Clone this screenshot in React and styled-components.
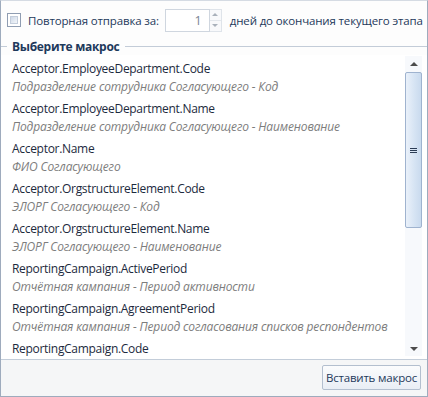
import React from "react";
import styled, { createGlobalStyle } from "styled-components";

const Global = createGlobalStyle`
  html, body { margin: 0; padding: 0; background: #fff; }
  body { font-family: "Open Sans", "Noto Sans", "Liberation Sans", sans-serif; }
  * { box-sizing: border-box; }
`;

const Window = styled.div`
  width: 428px;
  height: 397px;
  border: 1px solid #9eabbd;
  border-top-color: #d5dbe3;
  background: #fdfdfd;
  display: flex;
  flex-direction: column;
  font-size: 12px;
  color: #1e395b;
  overflow: hidden;
`;

const TopRow = styled.div`
  height: 36px;
  display: flex;
  align-items: center;
  padding: 2px 0 0 6px;
  font-size: 11.5px;
`;

const Check = styled.span`
  flex: 0 0 14px;
  width: 14px;
  height: 14px;
  border: 1px solid #8f9db2;
  background: #fff;
  padding: 2px;
  display: inline-flex;
  margin-right: 7px;
  &::after {
    content: "";
    flex: 1;
    background: linear-gradient(135deg, #cfd9e8, #f3f6fa);
    border: 1px solid #c3cddb;
  }
`;

const Label = styled.span`
  white-space: nowrap;
  letter-spacing: -0.15px;
`;

const Spinner = styled.div`
  flex: 0 0 auto;
  display: flex;
  height: 23px;
  margin: 0 8px 0 6px;
`;

const SpinInput = styled.div`
  width: 45px;
  border: 1px solid #cfd6df;
  background: #fff;
  color: #7a8594;
  display: flex;
  align-items: center;
  justify-content: flex-end;
  padding-right: 7px;
  font-size: 12.5px;
`;

const SpinButtons = styled.div`
  width: 12px;
  display: flex;
  flex-direction: column;
  border: 1px solid #dfe4ea;
  border-left: none;
`;

const SpinBtn = styled.div`
  flex: 1;
  display: flex;
  align-items: center;
  justify-content: center;
  background: #f8f9fb;
  & + & { border-top: 1px solid #e3e7ec; }
  &::after {
    content: "";
    border-left: 3px solid transparent;
    border-right: 3px solid transparent;
    ${(p) =>
      p.$down
        ? "border-top: 3px solid #a9b1bb;"
        : "border-bottom: 3px solid #a9b1bb;"}
  }
`;

const Group = styled.div`
  flex: 1;
  display: flex;
  flex-direction: column;
  min-height: 0;
`;

const Legend = styled.div`
  height: 18px;
  display: flex;
  align-items: center;
  &::before {
    content: "";
    width: 6px;
    height: 1px;
    background: #c3ccd8;
  }
  &::after {
    content: "";
    flex: 1;
    height: 1px;
    background: #c3ccd8;
  }
`;

const LegendText = styled.span`
  font-weight: 700;
  padding: 0 6px 0 5px;
  font-size: 12px;
  letter-spacing: -0.3px;
`;

const ListArea = styled.div`
  flex: 1;
  display: flex;
  min-height: 0;
  background: #fff;
  padding: 1px 5px 3px 0;
`;

const List = styled.div`
  flex: 1;
  overflow: hidden;
  padding: 4px 0 0 11px;
`;

const Item = styled.div`
  height: 40px;
  display: flex;
  flex-direction: column;
  line-height: 18px;
`;

const Title = styled.div`
  color: #1c2a3d;
  white-space: nowrap;
  letter-spacing: -0.3px;
`;

const Sub = styled.div`
  color: #7d7d7d;
  font-style: italic;
  white-space: nowrap;
  letter-spacing: -0.15px;
`;

const Scroll = styled.div`
  width: 17px;
  background: #f7f9fc;
  display: flex;
  flex-direction: column;
`;

const Arrow = styled.div`
  height: 15px;
  display: flex;
  align-items: center;
  justify-content: center;
  &::after {
    content: "";
    border-left: 4px solid transparent;
    border-right: 4px solid transparent;
    ${(p) =>
      p.$down
        ? "border-top: 4px solid #4c4c4c;"
        : "border-bottom: 4px solid #4c4c4c;"}
  }
`;

const Thumb = styled.div`
  height: 156px;
  margin-top: 1px;
  border: 1px solid #9fb3cf;
  border-radius: 2px;
  background: linear-gradient(90deg, #eaf1fa, #d5e3f3 60%, #c9daee);
  display: flex;
  align-items: center;
  justify-content: center;
`;

const Grip = styled.span`
  width: 7px;
  height: 5px;
  border-top: 1px solid #2b3c55;
  border-bottom: 1px solid #2b3c55;
  display: flex;
  align-items: center;
  &::after {
    content: "";
    flex: 1;
    height: 1px;
    background: #2b3c55;
  }
`;

const Track = styled.div`
  flex: 1;
`;

const Footer = styled.div`
  height: 37px;
  border-top: 1px solid #c3cdd9;
  background: #f5f6f7;
  display: flex;
  justify-content: flex-end;
  align-items: center;
  padding: 0 6px 2px 0;
`;

const Button = styled.button`
  height: 25px;
  width: 99px;
  border: 1px solid #b3bfcf;
  border-radius: 2px;
  background: linear-gradient(#fbfcfd, #e9eef5);
  color: #1e395b;
  font-family: inherit;
  font-size: 11.5px;
  padding: 0;
  white-space: nowrap;
  letter-spacing: -0.2px;
`;

const items = [
  ["Acceptor.EmployeeDepartment.Code", "Подразделение сотрудника Согласующего - Код"],
  ["Acceptor.EmployeeDepartment.Name", "Подразделение сотрудника Согласующего - Наименование"],
  ["Acceptor.Name", "ФИО Согласующего"],
  ["Acceptor.OrgstructureElement.Code", "ЭЛОРГ Согласующего - Код"],
  ["Acceptor.OrgstructureElement.Name", "ЭЛОРГ Согласующего - Наименование"],
  ["ReportingCampaign.ActivePeriod", "Отчётная кампания - Период активности"],
  ["ReportingCampaign.AgreementPeriod", "Отчётная кампания - Период согласования списков респондентов"],
  ["ReportingCampaign.Code", null],
];

export default function App() {
  return (
    <Window>
      <Global />
      <TopRow>
        <Check />
        <Label>Повторная отправка за:</Label>
        <Spinner>
          <SpinInput>1</SpinInput>
          <SpinButtons>
            <SpinBtn />
            <SpinBtn $down />
          </SpinButtons>
        </Spinner>
        <Label>дней до окончания текущего этапа</Label>
      </TopRow>
      <Group>
        <Legend>
          <LegendText>Выберите макрос</LegendText>
        </Legend>
        <ListArea>
          <List>
            {items.map(([t, s]) => (
              <Item key={t}>
                <Title>{t}</Title>
                {s && <Sub>{s}</Sub>}
              </Item>
            ))}
          </List>
          <Scroll>
            <Arrow />
            <Thumb>
              <Grip />
            </Thumb>
            <Track />
            <Arrow $down />
          </Scroll>
        </ListArea>
      </Group>
      <Footer>
        <Button>Вставить макрос</Button>
      </Footer>
    </Window>
  );
}
